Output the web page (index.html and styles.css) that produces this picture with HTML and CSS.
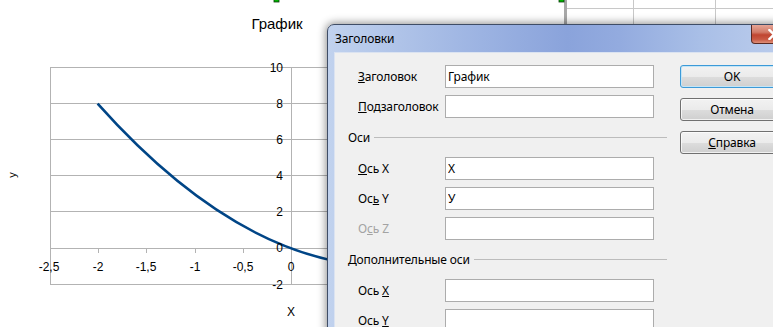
FILE: index.html
```html
<!DOCTYPE html>
<html lang="ru">
<head>
  <meta charset="UTF-8">
  <title>Заголовки</title>
  <link rel="stylesheet" href="styles.css">
</head>
<body>
  <div class="screen">
    <!-- chart behind the dialog -->
    <svg class="chart" width="773" height="327" viewBox="0 0 773 327">
      <g class="sheet">
        <rect class="col-bar" x="564" y="0" width="3" height="25"/>
        <line x1="567" y1="8.5" x2="773" y2="8.5"/>
        <line x1="633.5" y1="0" x2="633.5" y2="25"/>
        <line x1="715.5" y1="0" x2="715.5" y2="25"/>
      </g>
      <rect class="handle" x="274" y="-2" width="5" height="4"/>
      <rect class="handle" x="559" y="-2" width="5" height="4"/>

      <text class="title" x="277" y="29" text-anchor="middle">График</text>

      <g class="grid">
        <line x1="50" y1="67.5" x2="340" y2="67.5"/>
        <line x1="50" y1="103.5" x2="340" y2="103.5"/>
        <line x1="50" y1="139.5" x2="340" y2="139.5"/>
        <line x1="50" y1="175.5" x2="340" y2="175.5"/>
        <line x1="50" y1="211.5" x2="340" y2="211.5"/>
        <line x1="50" y1="248.5" x2="340" y2="248.5"/>
        <line x1="50" y1="284.5" x2="340" y2="284.5"/>
        <line x1="50.5" y1="67.5" x2="50.5" y2="284.5"/>
        <line x1="291.5" y1="67.5" x2="291.5" y2="284.5"/>
        <line x1="98.5" y1="248.5" x2="98.5" y2="253"/>
        <line x1="146.5" y1="248.5" x2="146.5" y2="253"/>
        <line x1="195.5" y1="248.5" x2="195.5" y2="253"/>
        <line x1="243.5" y1="248.5" x2="243.5" y2="253"/>
        <line x1="50.5" y1="248.5" x2="50.5" y2="253"/>
      </g>

      <path class="curve" d="M97.6 103.7 Q218.5 239.3 339.4 261.9"/>

      <g class="y-ticks" text-anchor="end">
        <text x="283" y="72">10</text>
        <text x="283" y="108">8</text>
        <text x="283" y="144">6</text>
        <text x="283" y="180">4</text>
        <text x="283" y="216">2</text>
        <text x="283" y="252">0</text>
        <text x="283" y="289">-2</text>
      </g>
      <g class="x-ticks" text-anchor="middle">
        <text x="49" y="271">-2,5</text>
        <text x="98" y="271">-2</text>
        <text x="146" y="271">-1,5</text>
        <text x="195" y="271">-1</text>
        <text x="243" y="271">-0,5</text>
        <text x="291" y="271">0</text>
      </g>
      <text x="291" y="316" text-anchor="middle">X</text>
      <text class="axis-y" transform="translate(16 175) rotate(-90)" text-anchor="middle">y</text>
    </svg>

    <div class="dialog">
      <div class="titlebar">
        <span class="caption">Заголовки</span>
        <div class="close-btn">
          <svg width="12" height="11" viewBox="0 0 12 11">
            <path d="M1.5 1 L10.5 10 M10.5 1 L1.5 10" stroke="#fff" stroke-width="2.4" stroke-linecap="square"/>
          </svg>
        </div>
      </div>

      <div class="client">
        <div class="fields">
          <div class="row">
            <label for="title"><u>З</u>аголовок</label>
            <input type="text" id="title" value="График">
          </div>
          <div class="row">
            <label for="subtitle"><u>П</u>одзаголовок</label>
            <input type="text" id="subtitle">
          </div>

          <div class="group"><span>Оси</span><i></i></div>
          <div class="row">
            <label for="axisX"><u>О</u>сь X</label>
            <input type="text" id="axisX" value="X">
          </div>
          <div class="row">
            <label for="axisY">Ос<u>ь</u> Y</label>
            <input type="text" id="axisY" value="У">
          </div>
          <div class="row disabled">
            <label for="axisZ">О<u>с</u>ь Z</label>
            <input type="text" id="axisZ">
          </div>

          <div class="group"><span>Дополнительные оси</span><i></i></div>
          <div class="row">
            <label for="secX">Ось <u>X</u></label>
            <input type="text" id="secX">
          </div>
          <div class="row">
            <label for="secY">Ось <u>Y</u></label>
            <input type="text" id="secY">
          </div>
        </div>

        <div class="buttons">
          <button class="btn default">OK</button>
          <button class="btn">Отмена</button>
          <button class="btn"><u>С</u>правка</button>
        </div>
      </div>
    </div>
  </div>
</body>
</html>
```

FILE: styles.css
```css
/* Page */
body {
  margin: 0;
  background: #ffffff;
}

.screen {
  position: relative;
  width: 773px;
  height: 327px;
  overflow: hidden;
  background: #ffffff;
  font-family: "Noto Sans", "Open Sans", sans-serif;
  font-size: 12px;
  letter-spacing: -0.15px;
  color: #000000;
}

/* Chart */
.chart {
  display: block;
}

.chart text {
  font-family: "Liberation Sans", Arial, sans-serif;
  font-size: 12px;
  letter-spacing: 0;
  fill: #000000;
}

.chart .title {
  font-size: 15px;
}

.chart .axis-y {
  font-size: 11px;
}

.grid line {
  stroke: #b3b3b3;
  stroke-width: 1;
}

.curve {
  fill: none;
  stroke: #004586;
  stroke-width: 2.6;
}

.sheet line {
  stroke: #c8c8c8;
  stroke-width: 1;
}

.sheet .col-bar {
  fill: #a8a8a8;
}

.handle {
  fill: #00b400;
  stroke: #0a3a0a;
  stroke-width: 0.8;
}

/* Dialog window */
.dialog {
  position: absolute; /* floats over the chart */
  left: 327px;
  top: 24px;
  width: 480px;
  height: 330px;
  box-sizing: border-box;
  padding: 0 6px;
  display: flex;
  flex-direction: column;
  border: 1px solid #3f4d66;
  border-radius: 7px 7px 0 0;
  background: linear-gradient(to right, #c1d2ee 0%, #afc3e8 15%, #9cb3e2 32%, #8aa3db 50%, #93abdf 61%, #a9bfe7 78%, #b4c7ea 88%, #bccdec 100%);
  box-shadow: 0 0 8px 1px rgba(0, 0, 0, 0.45);
}

.titlebar {
  height: 27px;
  display: flex;
  align-items: center;
  padding-left: 1px;
}

.close-btn {
  position: absolute;
  left: 423px;
  top: 0;
  width: 43px;
  height: 18px;
  display: flex;
  align-items: center;
  justify-content: center;
  border: 1px solid #5a2a23;
  border-top: none;
  border-radius: 0 0 4px 4px;
  background: linear-gradient(#e6a596 0%, #d17a67 40%, #c04530 55%, #c95a44 80%, #df8f78 100%);
}

.client {
  flex: 1;
  display: flex;
  padding-top: 12px;
  background: #f0f0f0;
  border: 1px solid #dbe3f1;
}

/* Left column with fields */
.fields {
  width: 319px;
  margin-left: 13px;
  display: flex;
  flex-direction: column;
}

.row {
  display: flex;
  align-items: center;
  height: 23px;
  margin-bottom: 7px;
  padding-left: 10px;
}

.row label {
  width: 87px;
  flex-shrink: 0;
}

.row input {
  width: 209px;
  height: 23px;
  box-sizing: border-box;
  margin: 0;
  padding: 0 2px;
  border: 1px solid #acacac;
  background: #ffffff;
  font-family: "Noto Sans", "Open Sans", sans-serif;
  font-size: 12px;
  letter-spacing: -0.15px;
  color: #000000;
  outline: none;
}

.row.disabled label {
  color: #a3a3a3;
}

.group {
  display: flex;
  align-items: center;
  height: 16px;
  margin: 4px 0 12px;
}

.group i {
  flex: 1;
  height: 1px;
  margin-left: 4px;
  background: #bcbcbc;
}

/* Right column with buttons */
.buttons {
  margin-left: 13px;
  display: flex;
  flex-direction: column;
  gap: 10px;
}

.btn {
  width: 104px;
  height: 23px;
  padding: 0;
  border: 1px solid #707070;
  border-radius: 3px;
  background: linear-gradient(#f2f2f2 0%, #ebebeb 50%, #dddddd 50%, #cfcfcf 100%);
  box-shadow: inset 0 0 0 1px rgba(255, 255, 255, 0.7);
  font-family: "Noto Sans", "Open Sans", sans-serif;
  font-size: 12px;
  letter-spacing: -0.15px;
  color: #000000;
}

.btn.default {
  border-color: #3c9ad8;
  box-shadow: inset 0 0 0 1px #c4e5f6;
}
```
